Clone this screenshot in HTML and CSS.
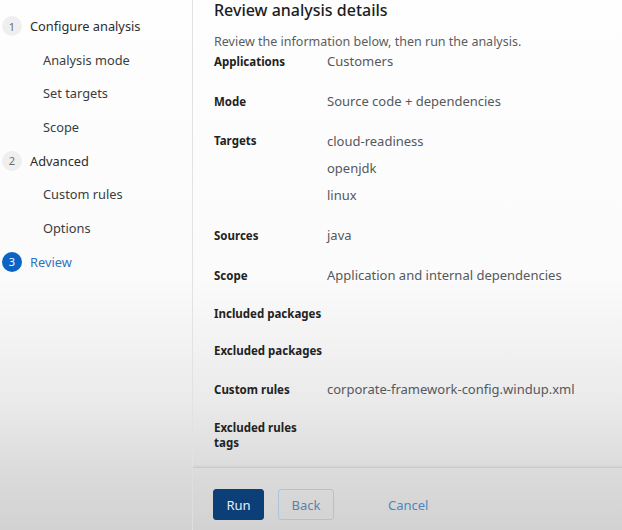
FILE: index.html
```html
<!DOCTYPE html>
<html lang="en">
<head>
<meta charset="utf-8">
<title>Review analysis details</title>
<link rel="stylesheet" href="styles.css">
</head>
<body>
<div class="wizard">
  <nav class="steps">
    <div class="step"><span class="num">1</span><span class="step-label">Configure analysis</span></div>
    <div class="substep">Analysis mode</div>
    <div class="substep">Set targets</div>
    <div class="substep">Scope</div>
    <div class="step"><span class="num">2</span><span class="step-label">Advanced</span></div>
    <div class="substep">Custom rules</div>
    <div class="substep">Options</div>
    <div class="step current"><span class="num">3</span><span class="step-label">Review</span></div>
  </nav>
  <main class="main">
    <section class="body">
      <h1 class="title">Review analysis details</h1>
      <p class="desc">Review the information below, then run the analysis.</p>
      <dl class="details">
        <dt>Applications</dt><dd>Customers</dd>
        <dt>Mode</dt><dd>Source code + dependencies</dd>
        <dt class="top">Targets</dt>
        <dd><ul class="values"><li>cloud-readiness</li><li>openjdk</li><li>linux</li></ul></dd>
        <dt>Sources</dt><dd>java</dd>
        <dt>Scope</dt><dd>Application and internal dependencies</dd>
        <dt>Included packages</dt><dd></dd>
        <dt>Excluded packages</dt><dd></dd>
        <dt>Custom rules</dt><dd>corporate-framework-config.windup.xml</dd>
        <dt>Excluded rules<br>tags</dt><dd></dd>
      </dl>
    </section>
    <footer class="footer">
      <button class="btn primary">Run</button>
      <button class="btn secondary">Back</button>
      <button class="btn link">Cancel</button>
    </footer>
  </main>
</div>
</body>
</html>
```

FILE: styles.css
```css
html, body {
  margin: 0;
  padding: 0;
  height: 100%;
}
body {
  font-family: "Noto Sans", "Open Sans", sans-serif;
  color: #151515;
  background: linear-gradient(to bottom, #fefefe 0%, #fbfbfb 52%, #ebebeb 75%, #dadada 90%, #d2d2d2 100%);
  overflow: hidden;
}
.wizard {
  display: flex;
  height: 530px;
}
.steps {
  width: 193px;
  flex: none;
  border-right: 1px solid #e2e2e2;
  box-sizing: border-box;
  padding-top: 17px;
  display: flex;
  flex-direction: column;
  gap: 15.7px;
}
.step {
  display: flex;
  align-items: center;
  gap: 8px;
  padding-left: 2px;
  height: 18px;
  font-size: 12.8px;
  color: #2b2d2f;
}
.num {
  width: 20px;
  height: 20px;
  border-radius: 50%;
  background: #efefef;
  color: #6a6e73;
  font-size: 11px;
  display: flex;
  align-items: center;
  justify-content: center;
}
.step.current .num {
  background: #0b63c4;
  color: #fff;
}
.step.current .step-label {
  color: #2f74c0;
}
.substep {
  height: 18px;
  line-height: 18px;
  font-size: 12.8px;
  padding-left: 43px;
  color: #3a3d40;
}
.main {
  flex: 1;
  display: flex;
  flex-direction: column;
  min-width: 0;
}
.body {
  flex: 1;
  min-height: 0;
  overflow: hidden;
  padding-left: 21px;
}
.title {
  margin: 0;
  padding-top: 1px;
  font-size: 16px;
  font-weight: 500;
  line-height: 19px;
  color: #1b1d1f;
}
.desc {
  margin: 13px 0 0;
  font-size: 12.5px;
  line-height: 18px;
  color: #5a5d61;
}
.details {
  margin: 1px 0 0;
  display: grid;
  grid-template-columns: 104px 1fr;
  column-gap: 9px;
  row-gap: 22px;
  align-items: center;
}
.details dt {
  font-size: 11.5px;
  font-weight: 700;
  line-height: 15px;
  white-space: nowrap;
  color: #222;
}
.details dt.top {
  align-self: start;
  padding-top: 1px;
}
.details dd {
  margin: 0;
  font-size: 13px;
  line-height: 18px;
  color: #55585c;
}
.values {
  list-style: none;
  margin: 0;
  padding: 0;
  display: flex;
  flex-direction: column;
  gap: 9px;
}
.footer {
  flex: none;
  height: 63px;
  box-sizing: border-box;
  border-top: 1px solid #cbcbcb;
  box-shadow: 0 -1px 2px rgba(0,0,0,0.05);
  padding: 21px 0 0 20px;
  display: flex;
  align-items: flex-start;
  gap: 14px;
}
.btn {
  font-family: inherit;
  font-size: 13px;
  height: 31px;
  border-radius: 3px;
  padding: 0 12px;
  cursor: pointer;
}
.primary {
  background: #0c3e78;
  color: #e9eef5;
  border: 1px solid #0c3e78;
  width: 51px;
}
.secondary {
  background: transparent;
  color: #5682ad;
  border: 1px solid #aec3d8;
  width: 56px;
}
.link {
  background: transparent;
  border: none;
  color: #4d87c3;
  margin-left: 28px;
  padding: 0 12px;
}
```
